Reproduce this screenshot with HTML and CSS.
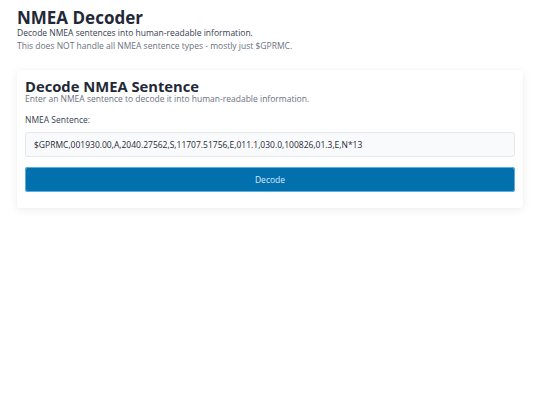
FILE: index.html
```html
<!DOCTYPE html>
<html>
<head>
<meta charset="utf-8">
<link rel="stylesheet" href="styles.css">
</head>
<body>
<div class="page">
  <header class="header">
    <h1 class="title">NMEA Decoder</h1>
    <p class="lead">Decode NMEA sentences into human-readable information.</p>
    <p class="note">This does NOT handle all NMEA sentence types - mostly just $GPRMC.</p>
  </header>
  <section class="card">
    <h2 class="card-title">Decode NMEA Sentence</h2>
    <p class="card-desc">Enter an NMEA sentence to decode it into human-readable information.</p>
    <label class="label" for="s">NMEA Sentence:</label>
    <input id="s" class="input" type="text" value="$GPRMC,001930.00,A,2040.27562,S,11707.51756,E,011.1,030.0,100826,01.3,E,N*13">
    <button class="btn">Decode</button>
  </section>
</div>
</body>
</html>
```
FILE: styles.css
```css
* { box-sizing: border-box; }
html, body { margin: 0; padding: 0; background: #fff; }
body { font-family: "Open Sans", "Noto Sans", sans-serif; color: #1f2937; }
.page { padding: 8px 17px; }
.header { margin-bottom: 18px; }
.title { margin: 0; font-size: 17px; font-weight: 700; line-height: 19px; color: #1f2937; }
.lead { margin: 0; font-size: 8.5px; line-height: 12px; color: #374151; }
.note { margin: 1px 0 0; font-size: 8.5px; line-height: 12px; color: #6b7280; }
.card {
  background: #fff;
  border-radius: 3px;
  box-shadow: 0 2px 10px rgba(0,0,0,0.07), 0 0 2px rgba(0,0,0,0.04);
  padding: 9px 8px 16px;
  display: flex;
  flex-direction: column;
}
.card-title { margin: 0; font-size: 14.75px; font-weight: 700; line-height: 15px; color: #1f2937; }
.card-desc { margin: 0 0 10px; font-size: 8.5px; line-height: 10px; color: #6b7280; }
.label { font-size: 8.5px; line-height: 12px; color: #374151; margin-bottom: 6px; }
.input {
  height: 25px;
  border: 1px solid #e5e7eb;
  border-radius: 3px;
  background: #f9fafb;
  font-family: "Open Sans", "Noto Sans", sans-serif;
  font-size: 8.5px;
  color: #1f2937;
  padding: 0 8px;
  margin-bottom: 10px;
}
.btn {
  height: 25px;
  border: none;
  border-radius: 3px;
  background: #0270ad;
  box-shadow: 0 0 0 1px #5aaee0 inset;
  color: #dbeafe;
  font-family: "Open Sans", "Noto Sans", sans-serif;
  font-size: 8.5px;
}
```
